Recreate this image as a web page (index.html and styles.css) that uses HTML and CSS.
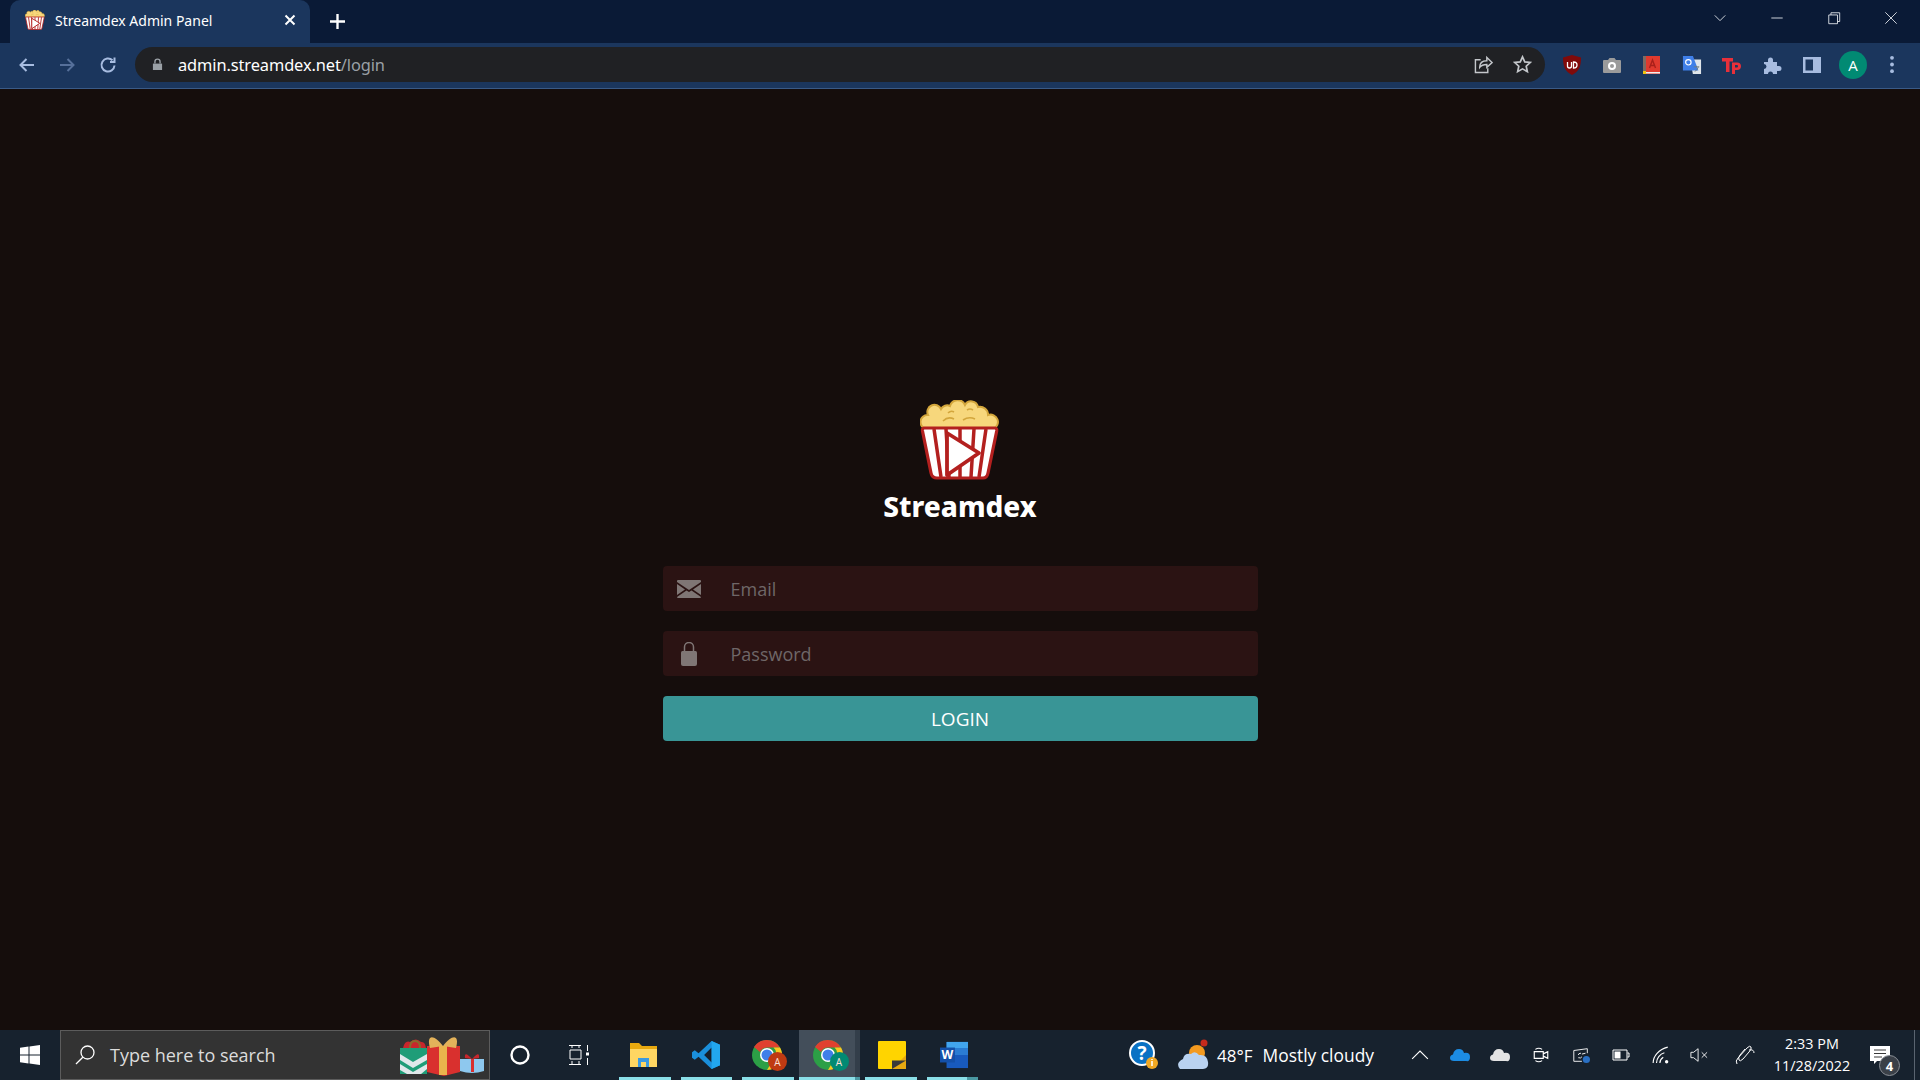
FILE: index.html
```html
<!DOCTYPE html>
<html lang="en">
<head>
<meta charset="utf-8">
<title>Streamdex Admin Panel</title>
<link rel="stylesheet" href="styles.css">
</head>
<body>
<svg class="defs" width="0" height="0" aria-hidden="true">
  <symbol id="popcorn" viewBox="0 0 80 80">
    <path d="M7 29A6.500 6.500 0 0 1 8 15 7 7 0 0 1 21 9 7 7 0 0 1 30 6 8 8 0 0 1 45 5 7 7 0 0 1 58 7 8 8 0 0 1 68 15 7 7 0 0 1 73 29z" fill="#f7d77c" stroke="#d3a63c" stroke-width="2"/>
    <path d="M23 21q5-5 11-2M43 20q6-4 12-1M28 13q3-3 6-1M47 10q3-2 6 0" fill="none" stroke="#d3a63c" stroke-width="1.600"/>
    <path d="M4 28h71q2 0 1.700 3L68 73q-1 5-5 5H17q-5 0-6-5L2.500 31q-.3-3 1.500-3z" fill="#fff" stroke="#b3201f" stroke-width="3.200"/>
    <path d="M14 29l7 48M26 29l3 48M40 29v48M54 29l-3 48M66 29l-7 48" fill="none" stroke="#b3201f" stroke-width="3.500"/>
    <path d="M27 33l32 20-32 22z" fill="#fff" stroke="#b3201f" stroke-width="3.800" stroke-linejoin="round"/>
  </symbol>
  <symbol id="chrome" viewBox="0 0 30 30">
    <circle cx="15" cy="15" r="15" fill="#2c9f46"/>
    <path d="M15 0a15 15 0 0 1 13 7.500H15a7.500 7.500 0 0 0-7 4.500L2 7a15 15 0 0 1 13-7z" fill="#e0402f"/>
    <path d="M28 7.500A15 15 0 0 1 15 30l6.500-11a7.500 7.500 0 0 0 0-11.500z" fill="#f9c81f"/>
    <circle cx="15" cy="15" r="7" fill="#fff"/>
    <circle cx="15" cy="15" r="5.500" fill="#3f7fe8"/>
  </symbol>
</svg>

<header class="browser">
  <div class="tabstrip">
    <div class="tab">
      <svg class="favicon"><use href="#popcorn"/></svg>
      <span class="tab-title">Streamdex Admin Panel</span>
      <svg class="tab-close" viewBox="0 0 12 12"><path d="M1.500 1.500l9 9M10.500 1.500l-9 9"/></svg>
    </div>
    <svg class="new-tab" viewBox="0 0 14 14"><path d="M7 0v14M0 7h14"/></svg>
    <div class="window-controls">
      <svg class="win-ctl" viewBox="0 0 16 16"><path d="M2 5l6 6 6-6"/></svg>
      <svg class="win-ctl" viewBox="0 0 16 16"><path d="M1.500 8h13"/></svg>
      <svg class="win-ctl" viewBox="0 0 16 16"><path d="M2 4.500h10v10H2zM4.500 4.500V2h10v10H12"/></svg>
      <svg class="win-ctl" viewBox="0 0 16 16"><path d="M1.500 1.500l13 13M14.500 1.500l-13 13"/></svg>
    </div>
  </div>
  <div class="toolbar">
    <svg class="nav-icon" viewBox="0 0 18 18"><path d="M16 9H3M8.500 3L2.500 9l6 6"/></svg>
    <svg class="nav-icon dim" viewBox="0 0 18 18"><path d="M2 9h13M9.500 3l6 6-6 6"/></svg>
    <svg class="nav-icon" viewBox="0 0 18 18"><path d="M15.500 9.500A6.500 6.500 0 1 1 13.500 4.300M15.500 1.500v4.500H11"/></svg>
    <div class="omnibox">
      <svg class="lock" viewBox="0 0 12 14"><path d="M1 6h10v7H1z" fill="#9aa0a6"/><path d="M3.200 6V4a2.800 2.800 0 0 1 5.600 0v2" fill="none" stroke="#9aa0a6" stroke-width="1.500"/></svg>
      <span class="url">admin.streamdex.net<span class="url-path">/login</span></span>
      <svg class="omni-icon" viewBox="0 0 20 20"><path d="M7 5H1.500v13.500h13V14M6 13c0-5 3-7 7.500-7V2.500L19 8l-5.500 5V10C10 10 7.500 11 6 13z"/></svg>
      <svg class="omni-icon star" viewBox="0 0 20 20"><path d="M10 2l2.400 5.300 5.800.6-4.300 3.900 1.200 5.700L10 14.600 4.900 17.500l1.200-5.700L1.800 7.900l5.800-.6z"/></svg>
    </div>
    <div class="extensions">
      <svg class="ext" viewBox="0 0 20 20"><path d="M10 0l9 2.500c0 9-2 14-9 17.500C3 16.500 1 11.500 1 2.500z" fill="#800a0a"/><path d="M5.500 7v4q0 2 2 2t2-2V7M11.500 7v6q3.500 0 3.500-3t-3.500-3z" fill="none" stroke="#fff" stroke-width="1.300"/></svg>
      <svg class="ext" viewBox="0 0 20 20"><path d="M1 6q0-1 1-1h4l1.500-2h5L14 5h4q1 0 1 1v11q0 1-1 1H2q-1 0-1-1z" fill="#9b9b9b"/><circle cx="10" cy="11" r="4" fill="#fff"/><circle cx="10" cy="11" r="2" fill="#9b9b9b"/></svg>
      <svg class="ext" viewBox="0 0 20 20"><path d="M1 1h17v18H1z" fill="#e03a2e"/><path d="M1 1h3v18H1z" fill="#7e6a62"/><path d="M4 17h14v1.500H4z" fill="#eee"/><path d="M1 16h3v3H1z" fill="#f1c40f"/><path d="M7.500 13L10.500 5l3 8M8.500 10.500h4" fill="none" stroke="#a8201a" stroke-width="1.400"/></svg>
      <svg class="ext" viewBox="0 0 22 22"><path d="M9 5h12v16H12z" fill="#dfe5ea"/><path d="M1 1h11l6 16H1z" fill="#3f7fe8"/><circle cx="7" cy="8" r="3" fill="none" stroke="#fff" stroke-width="1.300"/><path d="M13 13h6M16 12v1.500M14 18q3-1 4-5" fill="none" stroke="#6d7a80" stroke-width="1"/></svg>
      <svg class="ext" viewBox="0 0 20 20"><path d="M0 3h11v3.500H7.500V17H4V6.500H0z" fill="#e8303a"/><path d="M10 7.500h5q4 0 4 3.800t-4 3.700h-2V19h-3zM13 10v2.500h2q1 0 1-1.200t-1-1.300z" fill="#e8303a"/></svg>
      <svg class="ext puzzle" viewBox="0 0 20 20"><path d="M2 7h4V5a2.500 2.500 0 0 1 5 0v2h4v4h2a2.500 2.500 0 0 1 0 5h-2v3h-4a2.500 2.500 0 0 0-5 0H2v-5a2.500 2.500 0 0 0 0-5z" fill="#a7bce0"/></svg>
      <svg class="ext" viewBox="0 0 20 20"><path d="M1 2h18v16H1zM3.500 4.500v11H11v-11z" fill="#a7bce0" fill-rule="evenodd"/></svg>
      <span class="avatar">A</span>
      <svg class="kebab" viewBox="0 0 6 20"><circle cx="3" cy="3" r="2"/><circle cx="3" cy="10" r="2"/><circle cx="3" cy="17" r="2"/></svg>
    </div>
  </div>
</header>

<main class="page">
  <svg class="logo"><use href="#popcorn"/></svg>
  <h1 class="brand">Streamdex</h1>
  <form class="login">
    <label class="field">
      <svg class="field-icon" viewBox="0 0 24 18"><path d="M1 0h22q1 0 1 1v1L12 10 0 2V1q0-1 1-1zM0 4l8 5.500L0 15zM24 4v11l-8-5.500zM0 17l9.500-6.500L12 12l2.500-1.500L24 17q0 1-1 1H1q-1 0-1-1z"/></svg>
      <span class="placeholder">Email</span>
    </label>
    <label class="field">
      <svg class="field-icon lock-icon" viewBox="0 0 16 24"><path d="M1.500 9h13q1.500 0 1.500 1.500V22q0 2-2 2H2q-2 0-2-2V10.500Q0 9 1.500 9z"/><path d="M3.500 9V5a4.500 4.500 0 0 1 9 0v4" fill="none" stroke="#7f7675" stroke-width="1.500"/></svg>
      <span class="placeholder">Password</span>
    </label>
    <button class="submit" type="button">LOGIN</button>
  </form>
</main>

<footer class="taskbar">
  <div class="cell start">
    <svg class="win-logo" viewBox="0 0 20 20"><path d="M0 2.800l8.500-1.200v8H0zM9.500 1.400L20 0v9.600H9.500zM0 10.500h8.500v8L0 17.200zM9.500 10.500H20V20L9.500 18.600z"/></svg>
  </div>
  <div class="search">
    <svg class="search-icon" viewBox="0 0 20 20"><circle cx="12.500" cy="7.500" r="6.500"/><path d="M7.800 12.200L1 19"/></svg>
    <span class="search-text">Type here to search</span>
    <svg class="gifts" viewBox="0 0 86 42">
      <path d="M1 14h27v26H1z" fill="#1f9d78"/>
      <path d="M1 20l13 8 14-8v6l-14 8-13-8zM1 30l13 8 14-8v5l-6 5H8l-7-4z" fill="#dfe8ea"/>
      <path d="M4 14q2-8 7-6 6-5 11 0 4-1 5 6z" fill="#c8262c"/>
      <path d="M11 14q0-7 5-7t5 7" fill="none" stroke="#8a6a2a" stroke-width="2"/>
      <path d="M28 12h33v26l-16 4-17-4z" fill="#d9302e"/>
      <path d="M40 12h8v29h-8z" fill="#e9b44c"/>
      <path d="M44 12C35 0 27 0 31 14zM44 12C53 0 61 0 57 14z" fill="#e3b25a"/>
      <path d="M61 25h24v12q-12 4-24 0z" fill="#8ec8ee"/>
      <path d="M72 25h3v13h-3z" fill="#d9302e"/>
      <path d="M73 25q-8-9-7-1zM73 25q8-9 7-1z" fill="#c8262c"/>
    </svg>
  </div>
  <div class="cell">
    <svg class="cortana" viewBox="0 0 20 20"><circle cx="10" cy="10" r="8.500"/></svg>
  </div>
  <div class="cell">
    <svg class="taskview" viewBox="0 0 22 20"><path d="M0 .5h12M0 19.500h12M1 5h11v9H1zM3 0v3M10 0v3M3 16v3M10 16v3M18.500 0v6M18.500 13v7"/><path d="M17 7.500h3v3h-3z" fill="#fff" stroke="none"/></svg>
  </div>
  <div class="apps">
    <div class="app explorer">
      <svg class="app-icon" viewBox="0 0 28 24"><path d="M1 0h9l3 3h15v21H1z" fill="#e8a90f"/><path d="M1 6h27v18H1z" fill="#ffd662"/><path d="M9 15h11v9h-3v-5h-5v5H9z" fill="#3c9ae0"/></svg>
    </div>
    <div class="app">
      <svg class="app-icon" viewBox="0 0 30 30"><path d="M21 0l9 4v22l-9 4L7 17l-4 3-3-2v-6l3-2 4 3z" fill="#1a8fdb"/><path d="M21 7l-8 8 8 8z" fill="#16202c"/><path d="M21 0l9 4v22l-9 4z" fill="#22a7ee"/></svg>
    </div>
    <div class="app">
      <svg class="app-icon chrome-ic one"><use href="#chrome"/></svg>
      <span class="profile-badge red">A</span>
    </div>
    <div class="app active">
      <svg class="app-icon chrome-ic"><use href="#chrome"/></svg>
      <span class="profile-badge teal">A</span>
    </div>
    <div class="app sticky">
      <svg class="app-icon" viewBox="0 0 26 26"><path d="M1 0h24q1 0 1 1v25H1q-1 0-1-1V1q0-1 1-1z" fill="#ffd400"/><path d="M13 26l13-13v13z" fill="#e6a911"/><path d="M13 18h13L13 26z" fill="#3a3a3a"/></svg>
    </div>
    <div class="app word">
      <svg class="app-icon" viewBox="0 0 30 28"><path d="M7 0h23v28H7z" fill="#185abd"/><path d="M7 0h23v7H7z" fill="#41a5ee"/><path d="M7 7h23v7H7z" fill="#2b7cd3"/><path d="M0 6h16v16H0z" fill="#1450a8"/><text class="word-w" x="8" y="18.500">W</text></svg>
    </div>
  </div>
  <div class="tray">
    <div class="help">
      <svg class="help-icon" viewBox="0 0 30 30"><circle cx="13" cy="13" r="12" fill="#0a72c4" stroke="#fff" stroke-width="2"/><text class="help-q" x="13" y="20">?</text><circle cx="23" cy="23" r="6" fill="#f0a824"/><path d="M23 21v5M23 19v1" stroke="#fff" stroke-width="1.500"/></svg>
    </div>
    <svg class="weather-icon" viewBox="0 0 32 32"><circle cx="20" cy="14" r="8" fill="#f39a1f"/><circle cx="27" cy="4" r="3.500" fill="#c62a1c"/><path d="M3 30q-5-6 3-10 1-6 8-5 4-4 8 1 8-1 9 7 1 7-5 7z" fill="#b9d2f0"/></svg>
    <span class="temp">48°F</span>
    <span class="condition">Mostly cloudy</span>
    <svg class="tray-ic chevron" viewBox="0 0 16 16"><path d="M1 11.500l7-7 7 7"/></svg>
    <svg class="tray-ic cloud" viewBox="0 0 20 14"><path d="M4 13q-4 0-4-3t3-3.500Q4 1 9 1q4 0 5 4 6-1 6 4t-4 4z" fill="#1c8ce3"/></svg>
    <svg class="tray-ic cloud grey" viewBox="0 0 20 14"><path d="M4 13q-4 0-4-3t3-3.500Q4 1 9 1q4 0 5 4 6-1 6 4t-4 4z" fill="#e3e3e3"/></svg>
    <svg class="tray-ic" viewBox="0 0 16 16"><path d="M2 5h8v6H2zM10 7l4-2v6l-4-2M3 3q3-2 6 0M3 13q3 2 6 0"/></svg>
    <svg class="tray-ic" viewBox="0 0 20 20"><path d="M2 5l15-2v5M2 5v12h9M15 8l-4 1"/><path d="M7 10q0-2 3-2M7 13q3 1 4-1"/><circle cx="16" cy="15" r="4" fill="#2a70c4" stroke="none"/></svg>
    <svg class="tray-ic" viewBox="0 0 18 12"><path d="M1 1h14v10H1zM15.500 4H17v4h-1.500"/><path d="M2.500 2.500h6v7h-6z" fill="#fff" stroke="none"/></svg>
    <svg class="tray-ic" viewBox="0 0 16 16"><path d="M1 15C1 9 6 3 14 1M4 15c0-4 3-8 7-9M7 15c0-2 1.500-4 3-5"/><circle cx="13" cy="14" r="1.500" fill="#fff" stroke="none"/></svg>
    <svg class="tray-ic volume" viewBox="0 0 20 16"><path d="M1 5h3l5-4v14l-5-4H1zM13 5l6 6M19 5l-6 6"/></svg>
    <svg class="tray-ic pen" viewBox="0 0 20 20"><path d="M2 19q-2-3 1-6L12 3q3-3 4-1t-2 5l-6 7q-3 3-4 1t1-5l5-6M14 5q5-1 5 3"/></svg>
    <div class="clock"><span>2:33 PM</span><span>11/28/2022</span></div>
    <div class="notify">
      <svg class="note-ic" viewBox="0 0 20 18"><path d="M0 0h20v15H7l-3 3v-3H0z" fill="#fff"/><path d="M4 4h12M4 7.500h12M4 11h8" stroke="#3a3a3a" stroke-width="1"/></svg>
      <span class="note-count">4</span>
    </div>
  </div>
</footer>
</body>
</html>
```
FILE: styles.css
```css
* { box-sizing: border-box; }
html, body { margin: 0; height: 100%; }
body {
  display: flex;
  flex-direction: column;
  height: 1080px;
  width: 1920px;
  overflow: hidden;
  background: #150d0c;
  font-family: "Open Sans", "Noto Sans", sans-serif;
}
.defs { position: absolute; }
svg { display: block; flex: none; }

/* browser chrome */
.browser { flex: none; }
.tabstrip {
  height: 43px;
  background: #0a1a36;
  display: flex;
  align-items: flex-start;
  padding-left: 10px;
}
.tab {
  width: 300px;
  height: 43px;
  background: #1b365d;
  border-radius: 10px 10px 0 0;
  display: flex;
  align-items: center;
  padding: 0 14px 3px 15px;
  color: #fff;
}
.favicon { width: 20px; height: 20px; margin-right: 10px; }
.tab-title { font-size: 14px; flex: 1; white-space: nowrap; font-family: "Noto Sans", sans-serif; }
.tab-close { width: 12px; height: 12px; stroke: #fff; stroke-width: 2; fill: none; }
.new-tab { width: 15px; height: 15px; margin: 14px 0 0 20px; stroke: #fff; stroke-width: 2.200; fill: none; }
.window-controls {
  margin-left: auto;
  display: flex;
  align-items: center;
  height: 36px;
  padding-right: 22px;
}
.win-ctl { width: 14px; height: 14px; stroke: #e6e9ef; stroke-width: 1; fill: none; margin-left: 43px; }
.toolbar {
  height: 46px;
  background: #1b365d;
  border-bottom: 1px solid #3a5a86;
  display: flex;
  align-items: center;
  padding: 0 0 2px 18px;
}
.nav-icon { width: 18px; height: 18px; margin-right: 22px; stroke: #a7bce0; stroke-width: 2; fill: none; }
.nav-icon.dim { stroke: #56709a; }
.nav-icon:nth-of-type(3) { margin-right: 0; margin-left: 1px; }
.omnibox {
  width: 1410px;
  height: 35px;
  margin-left: 18px;
  border-radius: 18px;
  background: #202124;
  display: flex;
  align-items: center;
  padding: 0 13px 0 17px;
}
.lock { width: 11px; height: 13px; margin-right: 15px; }
.url { flex: 1; font-size: 16.400px; color: #fff; font-family: "Noto Sans", sans-serif; letter-spacing: -.1px; }
.url-path { color: #9aa0a6; }
.omni-icon { width: 19px; height: 19px; stroke: #c4c7cb; stroke-width: 1.500; fill: none; margin-left: 20px; }
.omni-icon.star { stroke-width: 1.800; }
.extensions { display: flex; align-items: center; margin-left: 17px; }
.ext { width: 20px; height: 20px; margin-right: 20px; }
.avatar {
  width: 28px;
  height: 28px;
  margin: 0 22px 0 -3px;
  border-radius: 50%;
  background: #018a73;
  color: #fff;
  font-size: 15px;
  display: flex;
  align-items: center;
  justify-content: center;
}
.kebab { width: 6px; height: 19px; fill: #a7bce0; }

/* login page */
.page {
  flex: 1;
  display: flex;
  flex-direction: column;
  align-items: center;
  padding-top: 311px;
}
.logo { width: 80px; height: 80px; }
.brand {
  margin: 7px 0 0;
  font-family: "Noto Sans", sans-serif;
  font-size: 28px;
  line-height: 38px;
  font-weight: 800;
  color: #fff;
}
.login {
  width: 595px;
  margin-top: 41px;
  display: flex;
  flex-direction: column;
  gap: 20px;
}
.field {
  height: 45px;
  background: #2b1313;
  border-radius: 4px;
  display: flex;
  align-items: center;
}
.field-icon { width: 24px; height: 18px; margin-left: 14px; fill: #7f7675; }
.lock-icon { width: 16px; height: 24px; margin: 0 4px 0 18px; }
.placeholder { margin-left: 30px; font-size: 18px; color: #6f6768; }
.submit {
  height: 45px;
  border: 0;
  border-radius: 4px;
  background: #399596;
  color: #fff;
  font: 19px "Open Sans", "Noto Sans", sans-serif;
}

/* taskbar */
.taskbar {
  flex: none;
  height: 50px;
  background: #17222e;
  color: #fff;
  display: flex;
  align-items: stretch;
}
.cell { width: 60px; display: flex; align-items: center; justify-content: center; }
.win-logo { width: 20px; height: 20px; fill: #fff; }
.search {
  width: 430px;
  background: #333;
  border: 1px solid #5c5c5c;
  display: flex;
  align-items: center;
  padding-left: 14px;
}
.search-icon { width: 20px; height: 20px; stroke: #fff; stroke-width: 1.300; fill: none; }
.search-text { margin-left: 15px; font-size: 18px; color: #dcdcdc; flex: 1; }
.gifts { width: 86px; height: 42px; margin: 0 4px 0 0; }
.cortana { width: 20px; height: 20px; stroke: #fff; stroke-width: 2.400; fill: none; }
.taskview { width: 22px; height: 20px; stroke: #fff; stroke-width: 1; fill: none; }
.apps { display: flex; margin-left: 4px; }
.app {
  --underline-dim: 0px;
  width: 61.500px;
  position: relative;
  display: flex;
  align-items: center;
  justify-content: center;
}
.app::after {
  content: "";
  position: absolute;
  left: 5px;
  right: 5px;
  bottom: 0;
  height: 3px;
  background: linear-gradient(90deg, #8adfe8 calc(100% - var(--underline-dim)), #4a98a2 0);
}
.app.explorer { padding-right: 3px; }
.app.sticky { padding-left: 2px; }
.app.word { padding-left: 4px; --underline-dim: 11px; }
.app.active {
  --underline-dim: 5px;
  background: #434e5a;
  box-shadow: inset -5px 0 0 #333e4a;
}
.app.active::after { left: 0; right: 0; }
.app-icon { width: 28px; height: 28px; }
.chrome-ic { width: 30px; height: 30px; margin-left: -3px; }
.chrome-ic.one { margin-left: -1px; }
.profile-badge {
  position: absolute;
  left: 31px;
  top: 22px;
  width: 19px;
  height: 19px;
  border-radius: 50%;
  font-size: 10px;
  display: flex;
  align-items: center;
  justify-content: center;
  color: #fbe0d8;
}
.profile-badge.red { background: #bf3a12; }
.profile-badge.teal { background: #018a73; }
.word-w { font: bold 13px "Open Sans", sans-serif; fill: #fff; text-anchor: middle; }
.tray { display: flex; align-items: center; margin-left: auto; }
.help-icon { width: 30px; height: 30px; }
.help-q { font: bold 19px "Open Sans", sans-serif; fill: #fff; text-anchor: middle; }
.weather-icon { width: 32px; height: 32px; margin-left: 18px; }
.temp { margin-left: 8px; font-size: 17px; }
.condition { margin-left: 10px; font-size: 17.400px; white-space: nowrap; }
.tray-ic { width: 18px; height: 18px; stroke: #fff; stroke-width: 1; fill: none; margin-left: 22px; }
.tray-ic.volume { margin-left: 20px; }
.chevron { margin-left: 37px; }
.cloud { width: 20px; height: 14px; stroke: none; margin-left: 21px; }
.cloud.grey { margin-left: 20px; }
.pen { width: 20px; height: 20px; margin-left: 27px; }
.clock {
  width: 84px;
  margin-left: 15px;
  display: flex;
  flex-direction: column;
  align-items: center;
  font-size: 14.400px;
  line-height: 22px;
}
.notify { position: relative; width: 66px; height: 100%; display: flex; align-items: center; padding-left: 16px; }
.notify::after {
  content: "";
  position: absolute;
  right: 5px;
  top: 0;
  bottom: 0;
  width: 1px;
  background: #5a6470;
}
.note-ic { width: 20px; height: 18px; }
.note-count {
  position: absolute;
  left: 25px;
  top: 25px;
  width: 21px;
  height: 21px;
  border-radius: 50%;
  background: #3a4048;
  border: 1px solid #8a8f96;
  font-size: 13px;
  font-weight: 700;
  display: flex;
  align-items: center;
  justify-content: center;
}
```
